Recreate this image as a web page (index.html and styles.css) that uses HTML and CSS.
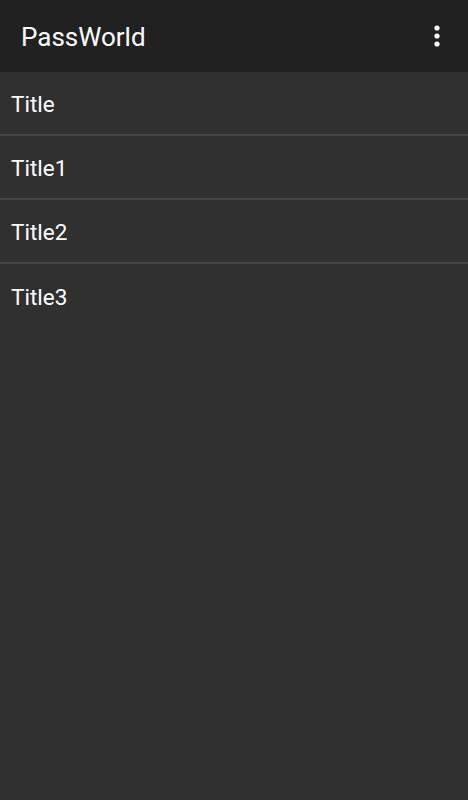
FILE: index.html
```html
<!DOCTYPE html>
<html>
<head>
    <title>PassWorld</title>
    <link rel="stylesheet" href="styles.css">
</head>
<body>
    <div class="toolbar">
        <span class="toolbar-title">PassWorld</span>
        <button class="menu-button" aria-label="More options">
            <svg width="10" height="24" viewBox="0 0 10 24">
                <circle cx="5" cy="4" r="2.6" fill="#fff"/>
                <circle cx="5" cy="12" r="2.6" fill="#fff"/>
                <circle cx="5" cy="20" r="2.6" fill="#fff"/>
            </svg>
        </button>
    </div>

    <ul class="entry-list">
        <li class="entry">Title</li>
        <li class="entry">Title1</li>
        <li class="entry">Title2</li>
        <li class="entry">Title3</li>
    </ul>
</body>
</html>
```

FILE: styles.css
```css
body {
    font-family: Roboto, "Noto Sans", sans-serif;
    margin: 0;
    padding: 0;
    background-color: #303030;
    color: #fff;
    min-height: 800px;
}

.toolbar {
    display: flex;
    align-items: center;
    justify-content: space-between;
    height: 72px;
    padding: 0 26px 0 21px;
    background-color: #212121;
    box-sizing: border-box;
}

.toolbar-title {
    font-size: 26px;
    padding-top: 1px;
}

.menu-button {
    display: flex;
    padding: 0;
    border: none;
    background: none;
    margin-bottom: 1px;
}

.entry-list {
    list-style: none;
    margin: 0;
    padding: 0;
}

.entry {
    display: flex;
    align-items: center;
    height: 64px;
    padding: 2px 11px 0;
    box-sizing: border-box;
    font-size: 22.5px;
    border-bottom: 2px solid #464646;
}

.entry:last-child {
    border-bottom: none;
}
```
